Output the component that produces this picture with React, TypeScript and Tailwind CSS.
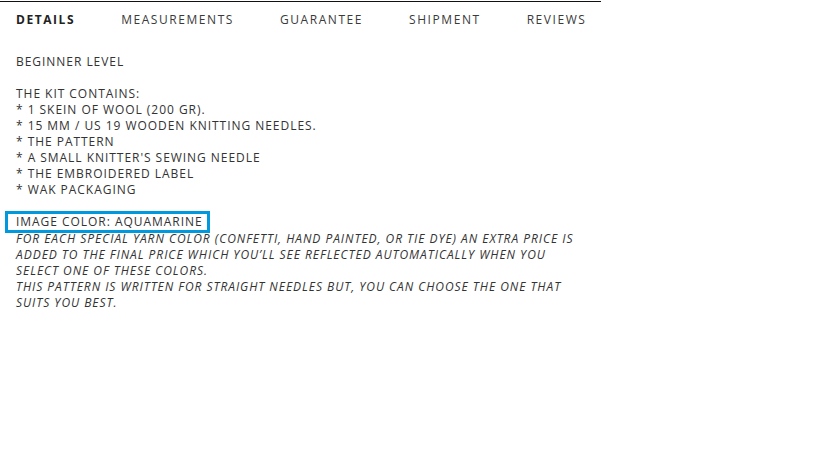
import React, { useState } from 'react';

const tabs = ['DETAILS', 'MEASUREMENTS', 'GUARANTEE', 'SHIPMENT', 'REVIEWS'];

const kitItems = [
  '* 1 SKEIN OF WOOL (200 GR).',
  '* 15 MM / US 19 WOODEN KNITTING NEEDLES.',
  '* THE PATTERN',
  "* A SMALL KNITTER'S SEWING NEEDLE",
  '* THE EMBROIDERED LABEL',
  '* WAK PACKAGING',
];

export default function App() {
  const [active, setActive] = useState('DETAILS');

  return (
    <div className="w-[819px] h-[460px] bg-white text-[#333] font-['Open_Sans',sans-serif]">
      <div className="w-[601px] border-t border-[#111] mt-px">
        <div className="flex gap-[46px] pl-4 pt-0 h-[36px] items-center">
          {tabs.map(tab => (
            <button
              key={tab}
              onClick={() => setActive(tab)}
              className={`text-[12px] leading-4 ${active === tab ? 'font-bold text-[#222] tracking-[0.13em]' : 'text-[#3a3a3a] tracking-[0.13em]'}`}
            >
              {tab}
            </button>
          ))}
        </div>

        <div className="pl-4 pt-[16px] text-[12px] leading-4 tracking-[0.08em]">
          <p>BEGINNER LEVEL</p>
          <p className="mt-4">THE KIT CONTAINS:</p>
          {kitItems.map(item => (
            <p key={item}>{item}</p>
          ))}
          <p className="mt-4">
            <span className="inline-block -ml-[11px] pl-[8px] pr-[4px] -my-[3px] border-[3px] border-[#0099dd]">
              IMAGE COLOR: AQUAMARINE
            </span>
          </p>
          <p className="italic w-[570px] mt-px">
            FOR EACH SPECIAL YARN COLOR (CONFETTI, HAND PAINTED, OR TIE DYE) AN EXTRA PRICE IS ADDED TO THE FINAL PRICE WHICH YOU’LL SEE REFLECTED AUTOMATICALLY WHEN YOU SELECT ONE OF THESE COLORS.
          </p>
          <p className="italic w-[570px]">
            THIS PATTERN IS WRITTEN FOR STRAIGHT NEEDLES BUT, YOU CAN CHOOSE THE ONE THAT SUITS YOU BEST.
          </p>
        </div>
      </div>
    </div>
  );
}
